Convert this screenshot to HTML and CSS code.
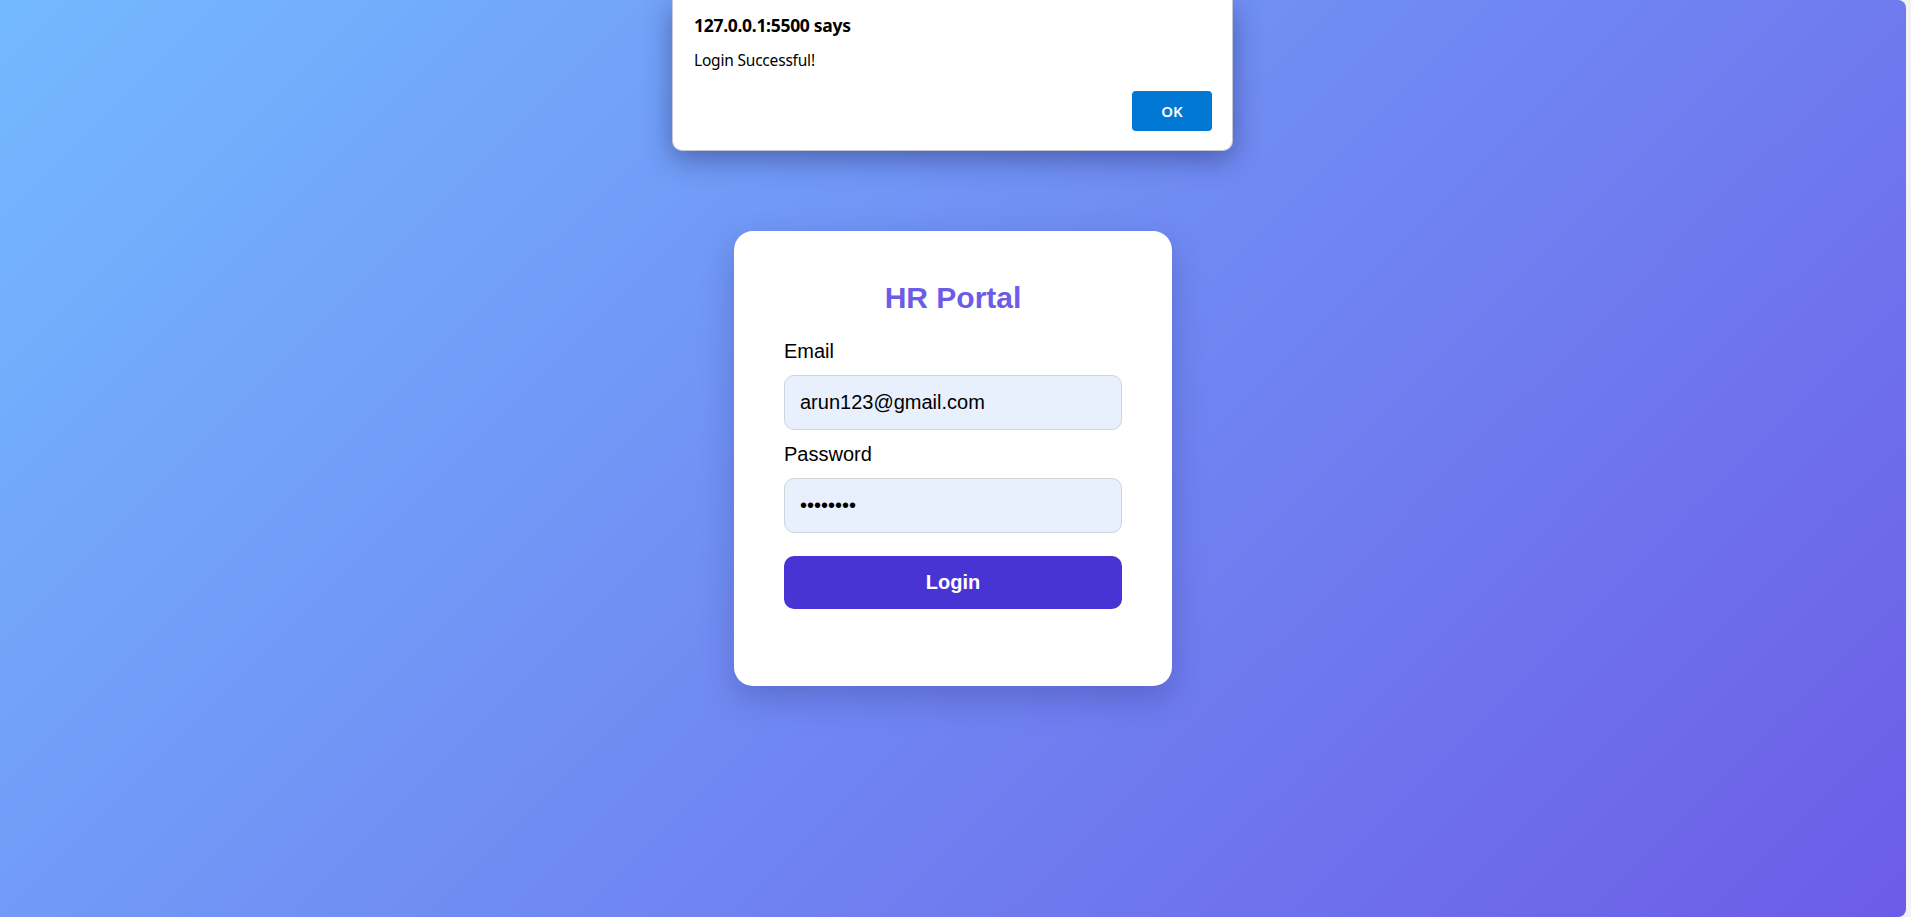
FILE: index.html
```html
<!DOCTYPE html>
<html lang="en">
<head>
<meta charset="UTF-8">
<title>HR Portal</title>
<link rel="stylesheet" href="styles.css">
</head>
<body>
<div class="screen">
  <div class="card">
    <h2 class="title">HR Portal</h2>
    <form class="form">
      <label class="label" for="email">Email</label>
      <input class="input" id="email" type="email" value="arun123@gmail.com">
      <label class="label" for="password">Password</label>
      <input class="input" id="password" type="password" value="12345678">
      <button class="btn" type="button">Login</button>
      <p class="message"></p>
    </form>
  </div>
</div>
<div class="alert">
  <div class="alert-title">127.0.0.1:5500 says</div>
  <div class="alert-msg">Login Successful!</div>
  <div class="alert-actions">
    <button class="alert-ok" type="button">OK</button>
  </div>
</div>
</body>
</html>
```

FILE: styles.css
```css
* { box-sizing: border-box; }
html, body { margin: 0; height: 100%; }
body {
  background: #f3f3f3;
  display: flex;
  padding-right: 5px;
  font-family: "Liberation Sans", Arial, sans-serif;
  overflow: hidden;
}
.screen {
  flex: 1;
  height: 100%;
  border-radius: 0 8px 8px 0;
  background: linear-gradient(135deg, #74b9ff, #6c5ce7);
  display: flex;
  align-items: center;
  justify-content: center;
}
.card {
  width: 438px;
  background: #fff;
  border-radius: 19px;
  padding: 50px 50px 50px;
  box-shadow: 0 12px 32px rgba(40, 40, 110, 0.28);
}
.title {
  margin: 0 0 25px;
  text-align: center;
  color: #6c5ce7;
  font-size: 30px;
  font-weight: bold;
  line-height: 34px;
}
.form { display: flex; flex-direction: column; }
.label {
  display: block;
  font-size: 20px;
  line-height: 23px;
  color: #000;
  margin-bottom: 12px;
}
.input {
  width: 100%;
  height: 55px;
  padding: 0 15px;
  font-family: "Liberation Sans", Arial, sans-serif;
  font-size: 20px;
  color: #000;
  background: #e8f0fe;
  border: 1px solid #cfd3da;
  border-radius: 10px;
  margin-bottom: 13px;
  outline: none;
}
.btn {
  margin-top: 10px;
  height: 53px;
  width: 100%;
  border: none;
  border-radius: 10px;
  background: #4834d4;
  color: #fff;
  font-family: "Liberation Sans", Arial, sans-serif;
  font-size: 20px;
  font-weight: bold;
}
.message { margin: 0; height: 27px; }

.alert {
  position: absolute;
  top: 0;
  left: 672px;
  width: 561px;
  height: 151px;
  background: #fff;
  border: 1px solid #c3c7d4;
  border-top: none;
  border-radius: 0 0 10px 10px;
  box-shadow: 0 8px 28px rgba(30, 30, 90, 0.45);
  padding: 13px 20px 0 21px;
  font-family: "Noto Sans", "Open Sans", sans-serif;
  color: #000;
}
.alert-title {
  font-size: 17.5px;
  font-weight: bold;
  line-height: 24px;
  letter-spacing: -0.3px;
}
.alert-msg {
  margin-top: 11px;
  font-size: 15.5px;
  line-height: 24px;
  letter-spacing: -0.2px;
}
.alert-actions {
  display: flex;
  justify-content: flex-end;
  margin-top: 19px;
}
.alert-ok {
  width: 80px;
  height: 40px;
  border: none;
  border-radius: 4px;
  background: #0078d4;
  color: #fff;
  font-family: "Noto Sans", "Open Sans", sans-serif;
  font-size: 15px;
  font-weight: 600;
}
```
